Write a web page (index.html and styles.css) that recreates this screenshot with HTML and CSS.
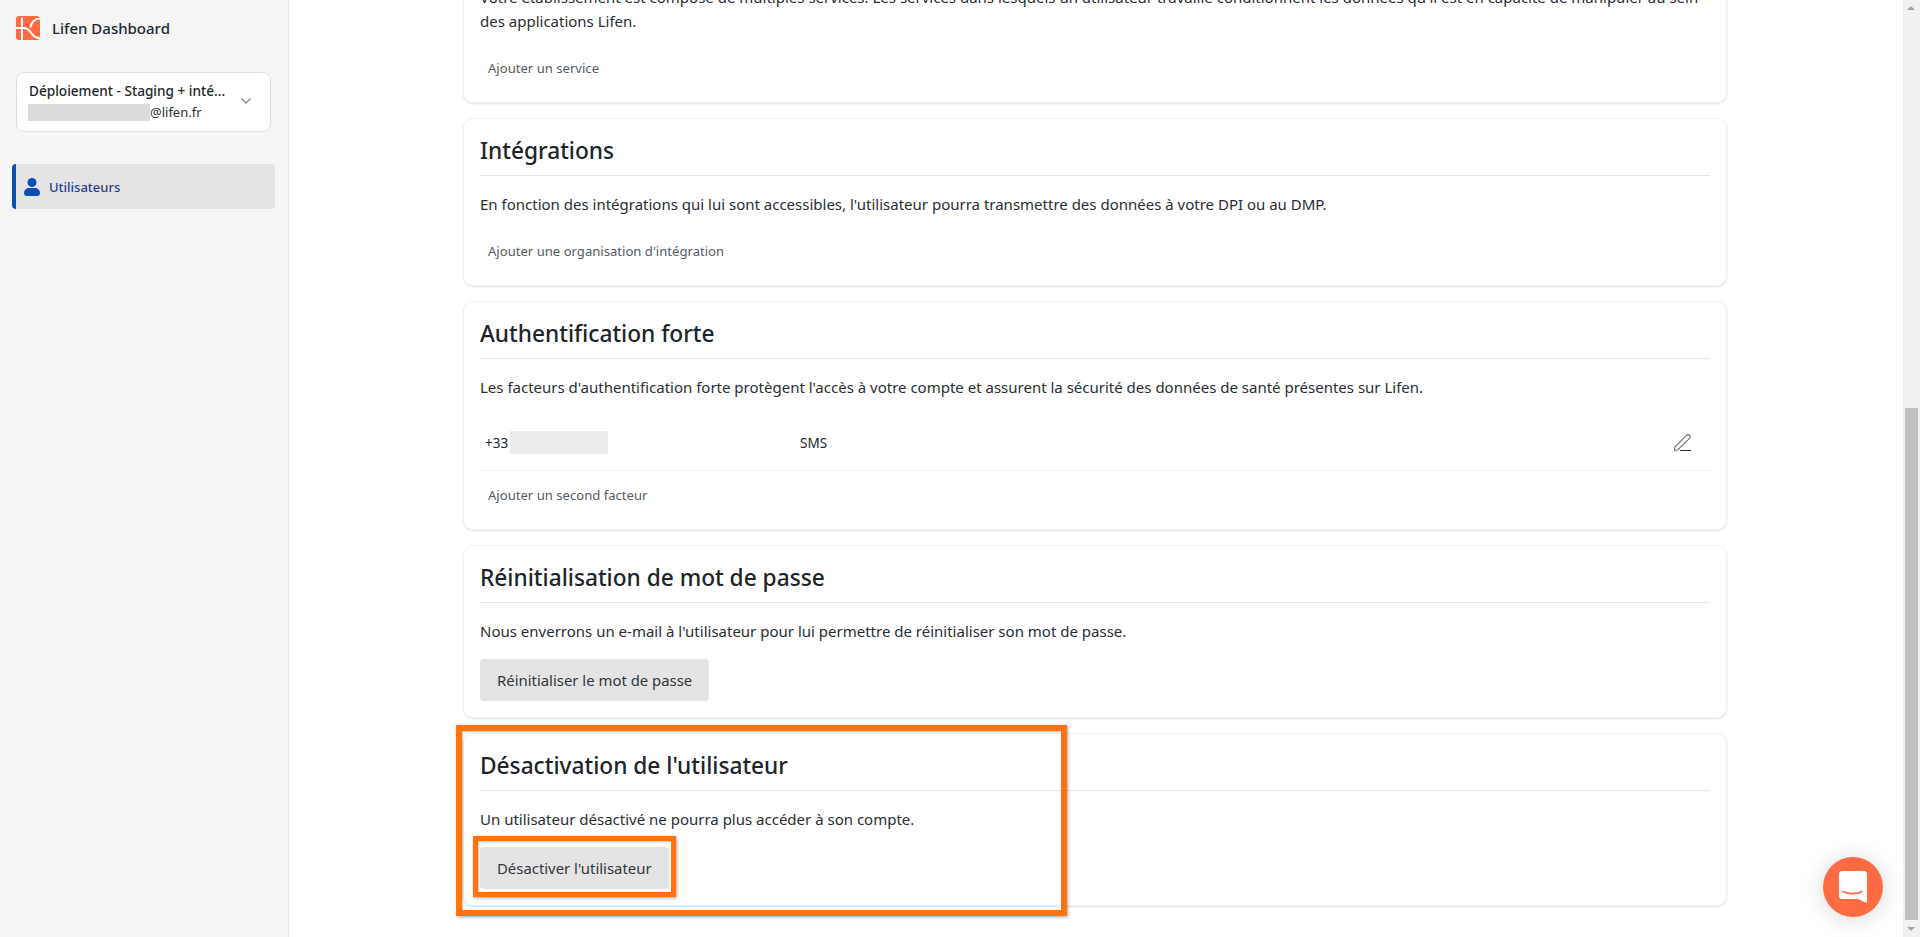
FILE: index.html
```html
<!DOCTYPE html>
<html lang="fr">
<head>
  <meta charset="UTF-8" />
  <title>Lifen Dashboard</title>
  <link rel="stylesheet" href="styles.css">
</head>
<body>

<aside class="sidebar">
  <div class="brand">
    <svg class="brand-logo" viewBox="0 0 24 24" aria-hidden="true">
      <rect width="24" height="24" rx="3" fill="#ff6b43"/>
      <path d="M6 1.500V24M0 12h8c4 0 6 3 8 6s4 4 8 4M24 2.500c-5 0-9 4-9.500 9" fill="none" stroke="#fff" stroke-width="2"/>
    </svg>
    <span>Lifen Dashboard</span>
  </div>

  <div class="account">
    <div class="account-text">
      <div class="account-name">Déploiement - Staging + inté...</div>
      <div class="account-mail"><span class="redacted"></span>@lifen.fr</div>
    </div>
    <svg class="chevron" viewBox="0 0 12 8" aria-hidden="true"><path d="M1.500 1.500 6 6l4.500-4.500" fill="none" stroke="#8a8f96" stroke-width="1.400"/></svg>
  </div>

  <a class="nav-item">
    <svg viewBox="0 0 16 18" aria-hidden="true"><circle cx="8" cy="4.500" r="4.500" fill="#0a4fb4"/><path d="M0 15c0-3 2.500-5 5-5h6c2.500 0 5 2 5 5 0 2-1 3-3 3H3c-2 0-3-1-3-3z" fill="#0a4fb4"/></svg>
    <span>Utilisateurs</span>
  </a>
</aside>

<main class="content">
  <section class="card">
    <h2>Services</h2>
    <p>Votre établissement est composé de multiples services. Les services dans lesquels un utilisateur travaille conditionnent les données qu'il est en capacité de manipuler au sein des applications Lifen.</p>
    <a class="add-link">Ajouter un service</a>
  </section>

  <section class="card">
    <h2>Intégrations</h2>
    <p>En fonction des intégrations qui lui sont accessibles, l'utilisateur pourra transmettre des données à votre DPI ou au DMP.</p>
    <a class="add-link">Ajouter une organisation d'intégration</a>
  </section>

  <section class="card">
    <h2>Authentification forte</h2>
    <p>Les facteurs d'authentification forte protègent l'accès à votre compte et assurent la sécurité des données de santé présentes sur Lifen.</p>
    <div class="factor">
      <div class="factor-phone">+33<span class="redacted-light"></span></div>
      <div class="factor-type">SMS</div>
      <svg class="edit" viewBox="0 0 17 17" aria-hidden="true">
        <path d="M.8 13.200 12.500 1.300a2.100 2.100 0 0 1 3 3L3.700 16 .6 16.400z" fill="none" stroke="#6b7078" stroke-width="1.100"/>
        <path d="M6 16.500h11" stroke="#2b2f36" stroke-width="1"/>
      </svg>
    </div>
    <a class="add-link add-link-tight">Ajouter un second facteur</a>
  </section>

  <section class="card">
    <h2>Réinitialisation de mot de passe</h2>
    <p>Nous enverrons un e-mail à l'utilisateur pour lui permettre de réinitialiser son mot de passe.</p>
    <button class="btn">Réinitialiser le mot de passe</button>
  </section>

  <section class="card">
    <h2>Désactivation de l'utilisateur</h2>
    <p>Un utilisateur désactivé ne pourra plus accéder à son compte.</p>
    <button class="btn">Désactiver l'utilisateur</button>
  </section>
</main>

<!-- annotation boxes drawn over the page -->
<div class="mark mark-card"></div>
<div class="mark mark-btn"></div>

<div class="chat">
  <svg viewBox="0 0 28 32" aria-hidden="true">
    <path d="M3 0h22a3 3 0 0 1 3 3v29l-9-4H3a3 3 0 0 1-3-3V3a3 3 0 0 1 3-3z" fill="#fff"/>
    <path d="M4 20.500c5 2.800 14 2.800 19 0" fill="none" stroke="#ff6b43" stroke-width="1.600" stroke-linecap="round"/>
  </svg>
</div>

<div class="scrollbar">
  <div class="scroll-btn scroll-up"></div>
  <div class="scroll-track"><div class="scroll-thumb"></div></div>
  <div class="scroll-btn scroll-down"></div>
</div>

</body>
</html>
```

FILE: styles.css
```css
* { margin: 0; padding: 0; box-sizing: border-box; }

html, body {
  height: 100%;
  overflow: hidden;
  font-family: "Noto Sans", sans-serif;
  color: #22262b;
  background: #fff;
}

body { display: flex; }

.sidebar {
  width: 289px;
  flex: none;
  background: #f5f5f5;
  border-right: 1px solid #e6e6e6;
  padding: 16px 13px 0 12px;
}

.brand {
  display: flex;
  align-items: center;
  gap: 12px;
  padding-left: 4px;
  height: 24px;
  font-size: 15px;
  font-weight: 500;
  color: #1d2733;
}

.brand-logo { width: 24px; height: 24px; }

.account {
  display: flex;
  align-items: center;
  justify-content: space-between;
  margin: 32px 4px 0 4px;
  height: 60px;
  padding: 0 18px 0 12px;
  background: #fff;
  border: 1px solid #dedfe1;
  border-radius: 8px;
}

.account-name { font-size: 13.600px; font-weight: 500; line-height: 20px; }

.account-mail {
  display: flex;
  align-items: center;
  font-size: 13px;
  line-height: 23px;
  color: #2a3038;
}

.redacted {
  width: 122px;
  height: 17px;
  margin-left: -1px;
  background: #dcdcdc;
}

.chevron { width: 12px; height: 8px; margin-top: -2px; }

.nav-item {
  display: flex;
  align-items: center;
  gap: 9px;
  height: 45px;
  margin-top: 32px;
  padding-left: 8px;
  background: #e4e4e4;
  border-left: 4px solid #0a4fb4;
  border-radius: 4px;
  font-size: 13px;
  font-weight: 500;
  color: #26408f;
}

.nav-item svg { width: 16px; height: 18px; }

.content {
  flex: 1;
  height: 100%;
  display: flex;
  flex-direction: column;
  justify-content: flex-end;
  gap: 15px;
  padding: 0 193px 31px 174px;
  overflow: hidden;
}

.card {
  flex: none;
  background: #fff;
  border: 1px solid #f1f1f2;
  border-radius: 10px;
  box-shadow: 0 1px 2px rgba(0, 0, 0, 0.12);
  padding: 14px 16px 16px 16px;
}

.card h2 {
  font-size: 22.700px;
  font-weight: 500;
  line-height: 36px;
  padding-bottom: 6px;
  border-bottom: 1px solid #e6e7e9;
  color: #20242a;
}

.card p {
  font-size: 15px;
  line-height: 24px;
  margin-top: 16px;
  color: #2a2e34;
}

.add-link {
  display: flex;
  align-items: center;
  height: 37px;
  margin-top: 16px;
  padding: 0 8px;
  font-size: 13.100px;
  color: #555b64;
}

.add-link-tight { margin-top: 5px; }

.factor {
  display: flex;
  align-items: center;
  height: 56px;
  margin-top: 16px;
  padding: 0 19px 0 5px;
  border-bottom: 1px solid #f1f1f2;
  font-size: 13.500px;
}

.factor-phone { display: flex; align-items: center; width: 315px; }

.redacted-light { width: 98px; height: 23px; margin-left: 2px; background: #ececec; }

.factor-type { flex: 1; }

.edit { width: 17px; height: 17px; }

.btn {
  display: block;
  height: 42px;
  margin-top: 16px;
  padding: 0 17px;
  background: #e4e4e4;
  border: none;
  border-radius: 4px;
  font-family: inherit;
  font-size: 14.900px;
  color: #33373d;
}

.mark {
  position: absolute;
  border: 6px solid #ff7311;
  box-shadow: 1px 1px 3px rgba(0, 0, 0, 0.35), inset 1px 1px 2px rgba(0, 0, 0, 0.25);
}

.mark-card { left: 456px; top: 725px; width: 611px; height: 191px; }
.mark-btn { left: 473px; top: 836px; width: 203px; height: 61px; border-width: 5px; }

.chat {
  position: absolute;
  left: 1823px;
  top: 857px;
  width: 60px;
  height: 60px;
  display: flex;
  align-items: center;
  justify-content: center;
  background: #ff6b43;
  border-radius: 50%;
  box-shadow: 0 2px 24px rgba(0, 0, 0, 0.16);
}

.chat svg { width: 28px; height: 32px; }

.scrollbar {
  position: absolute;
  right: 0;
  top: 0;
  bottom: 0;
  width: 17px;
  display: flex;
  flex-direction: column;
  background: #f1f1f1;
}

.scroll-btn { height: 17px; flex: none; position: relative; }

.scroll-btn::after {
  content: "";
  position: absolute;
  left: 4px;
  border-left: 4px solid transparent;
  border-right: 4px solid transparent;
}

.scroll-up::after { top: 6px; border-bottom: 4px solid #a3a3a3; }
.scroll-down::after { top: 7px; border-top: 4px solid #a3a3a3; }

.scroll-track { flex: 1; display: flex; flex-direction: column; justify-content: flex-end; }

.scroll-thumb { height: 512px; margin: 0 2px; background: #c1c1c1; }
```
